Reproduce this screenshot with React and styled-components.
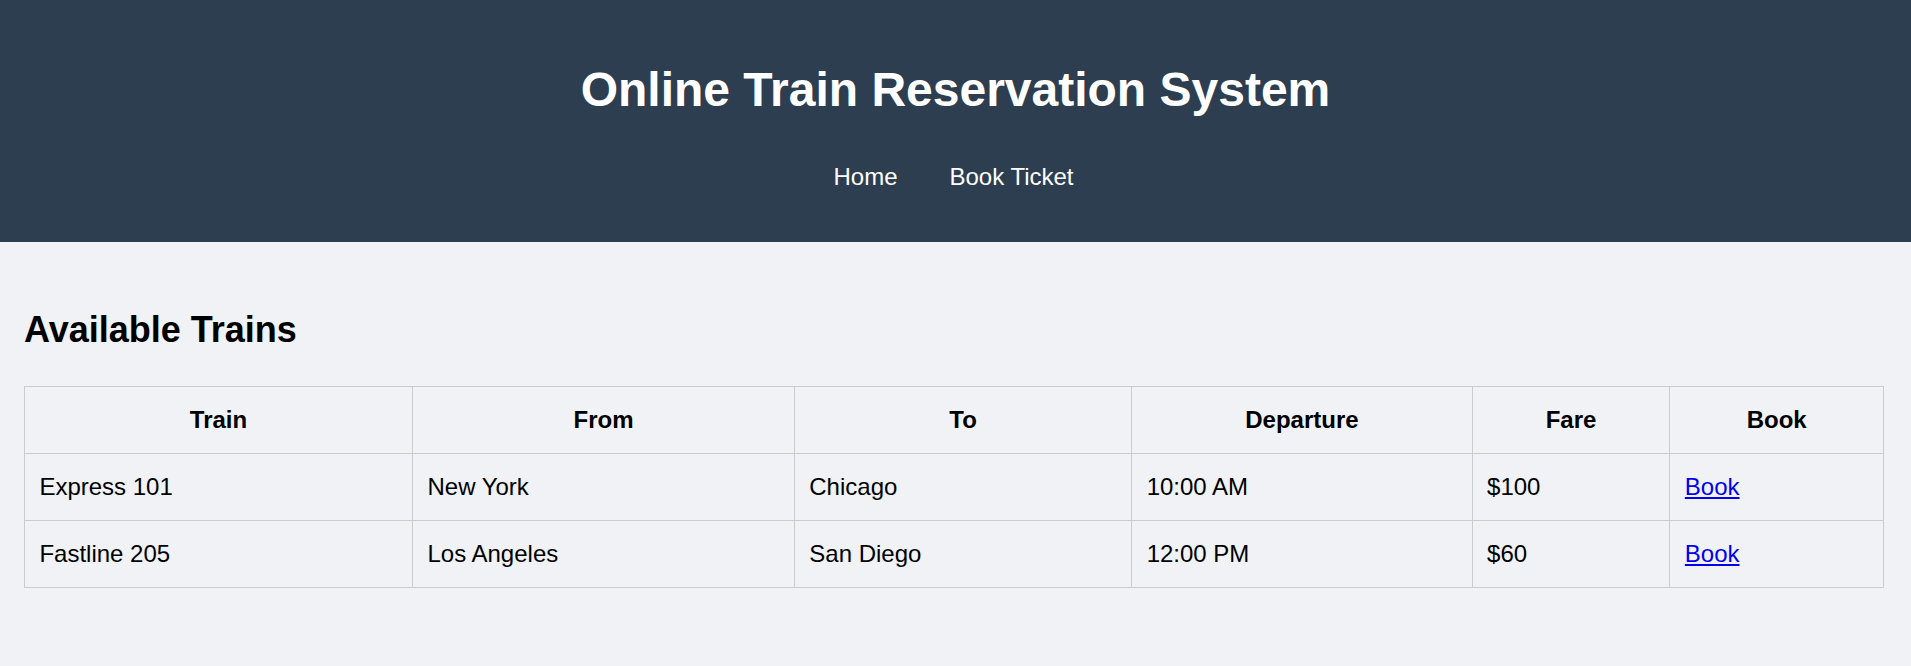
import React from "react";
import styled, { createGlobalStyle } from "styled-components";

const GlobalStyle = createGlobalStyle`
  html, body {
    margin: 0;
    padding: 0;
    background: #f0f2f5;
    font-family: "Liberation Sans", Arial, sans-serif;
  }
`;

const Header = styled.header`
  background: #2c3e50;
  color: #ffffff;
  text-align: center;
  padding: 62px 0 51px;
`;

const Title = styled.h1`
  margin: 0 0 46px;
  font-size: 48px;
  font-weight: 700;
  line-height: normal;
`;

const Nav = styled.nav`
  display: flex;
  justify-content: center;
  gap: 52px;
  padding-right: 4px;
`;

const NavLink = styled.a`
  color: #ffffff;
  text-decoration: none;
  font-size: 24px;
  line-height: normal;
`;

const Main = styled.main`
  padding: 67px 27px 24px 24px;
`;

const SectionTitle = styled.h2`
  margin: 0 0 35px;
  font-size: 36px;
  font-weight: 700;
  color: #000;
  line-height: normal;
`;

const Table = styled.table`
  width: 100%;
  border-collapse: collapse;
  font-size: 24px;
  color: #000;
`;

const HeadCell = styled.th`
  border: 1px solid #cccccc;
  padding: 19px 14.4px;
  text-align: center;
  font-weight: 700;
  line-height: normal;
`;

const Cell = styled.td`
  border: 1px solid #cccccc;
  padding: 19px 14.4px;
  text-align: left;
  line-height: normal;
`;

const BookLink = styled.a`
  color: #0000ee;
  text-decoration: underline;
`;

const trains = [
  { name: "Express 101", from: "New York", to: "Chicago", dep: "10:00 AM", fare: "$100" },
  { name: "Fastline 205", from: "Los Angeles", to: "San Diego", dep: "12:00 PM", fare: "$60" },
];

export default function App() {
  return (
    <>
      <GlobalStyle />
      <Header>
        <Title>Online Train Reservation System</Title>
        <Nav>
          <NavLink href="#">Home</NavLink>
          <NavLink href="#">Book Ticket</NavLink>
        </Nav>
      </Header>
      <Main>
        <SectionTitle>Available Trains</SectionTitle>
        <Table>
          <thead>
            <tr>
              <HeadCell>Train</HeadCell>
              <HeadCell>From</HeadCell>
              <HeadCell>To</HeadCell>
              <HeadCell>Departure</HeadCell>
              <HeadCell>Fare</HeadCell>
              <HeadCell>Book</HeadCell>
            </tr>
          </thead>
          <tbody>
            {trains.map((t) => (
              <tr key={t.name}>
                <Cell>{t.name}</Cell>
                <Cell>{t.from}</Cell>
                <Cell>{t.to}</Cell>
                <Cell>{t.dep}</Cell>
                <Cell>{t.fare}</Cell>
                <Cell>
                  <BookLink href="#">Book</BookLink>
                </Cell>
              </tr>
            ))}
          </tbody>
        </Table>
      </Main>
    </>
  );
}
